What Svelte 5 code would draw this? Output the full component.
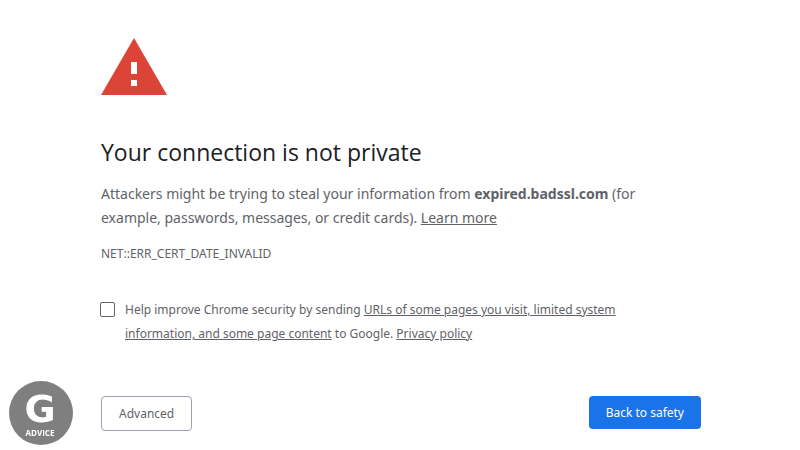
<script>
  let optIn = $state(false);
</script>

<main>
  <svg class="warning" viewBox="0 0 66 57" role="img" aria-label="Warning">
    <path fill="#db4437" d="M33 0 66 57H0z" />
    <path fill="#fff" d="M30 24h6v12h-6zM30 42h6v6h-6z" />
  </svg>
  <h1>Your connection is not private</h1>
  <p class="lead">
    Attackers might be trying to steal your information from <strong>expired.badssl.com</strong> (for
    example, passwords, messages, or credit cards). <a href="#learn">Learn more</a>
  </p>
  <p class="code">NET::ERR_CERT_DATE_INVALID</p>
  <div class="opt-in">
    <input id="opt-in" type="checkbox" bind:checked={optIn} />
    <label for="opt-in">
      Help improve Chrome security by sending <a href="#data">URLs of some pages you visit, limited system information, and some page content</a> to Google. <a href="#privacy">Privacy policy</a>
    </label>
  </div>
  <div class="actions">
    <button type="button">Advanced</button>
    <button type="button" class="primary">Back to safety</button>
  </div>
</main>

<svg class="logo" viewBox="0 0 64 64" role="img" aria-label="G Advice">
  <circle cx="32" cy="32" r="32" fill="#7f7f7f" />
  <text class="initial" x="31" y="41" text-anchor="middle">G</text>
  <text x="31" y="55" text-anchor="middle">ADVICE</text>
</svg>

<style>
  :global(body) {
    background: #fff;
  }
  main {
    box-sizing: border-box;
    max-width: 600px;
    margin: 0 auto;
    padding-top: 38px;
    position: relative;
    left: 1px;
    color: #5f6368;
    font: 14px/24px "Noto Sans", "Open Sans", sans-serif;
  }
  .warning {
    display: block;
    width: 66px;
    height: 57px;
  }
  h1 {
    margin: 41px 0 14px;
    color: #202124;
    font-family: "Open Sans", "Noto Sans", sans-serif;
    font-size: 23px;
    font-weight: 400;
    line-height: 32px;
  }
  p {
    margin: 0;
  }
  a {
    color: inherit;
  }
  .lead,
  .opt-in {
    padding-right: 24px;
  }
  .code {
    margin-top: 12px;
    font-size: 12px;
  }
  .opt-in {
    display: flex;
    gap: 10px;
    margin-top: 32px;
    font-size: 12px;
  }
  input {
    appearance: none;
    flex: none;
    box-sizing: border-box;
    width: 15px;
    height: 15px;
    margin: 4px 0 0 -1px;
    border: 1px solid #5f6368;
    border-radius: 2px;
    background: #fff;
  }
  input:checked {
    background: #1a73e8;
  }
  .actions {
    display: flex;
    justify-content: space-between;
    align-items: flex-start;
    margin-top: 50px;
  }
  button {
    padding: 1px 17px 0;
    border: 1px solid #9aa0b0;
    border-radius: 4px;
    background: #fff;
    color: #5f6368;
    font: 12px/32px "Noto Sans", "Open Sans", sans-serif;
  }
  .primary {
    border: 0;
    background: #1a73e8;
    color: #fff;
  }
  .logo {
    position: fixed;
    left: 9px;
    bottom: 5px;
    width: 64px;
    height: 64px;
  }
  text {
    fill: #fff;
    font: 700 8px "Open Sans", sans-serif;
  }
  .initial {
    font-family: "DejaVu Sans", sans-serif;
    font-size: 38px;
  }
</style>
